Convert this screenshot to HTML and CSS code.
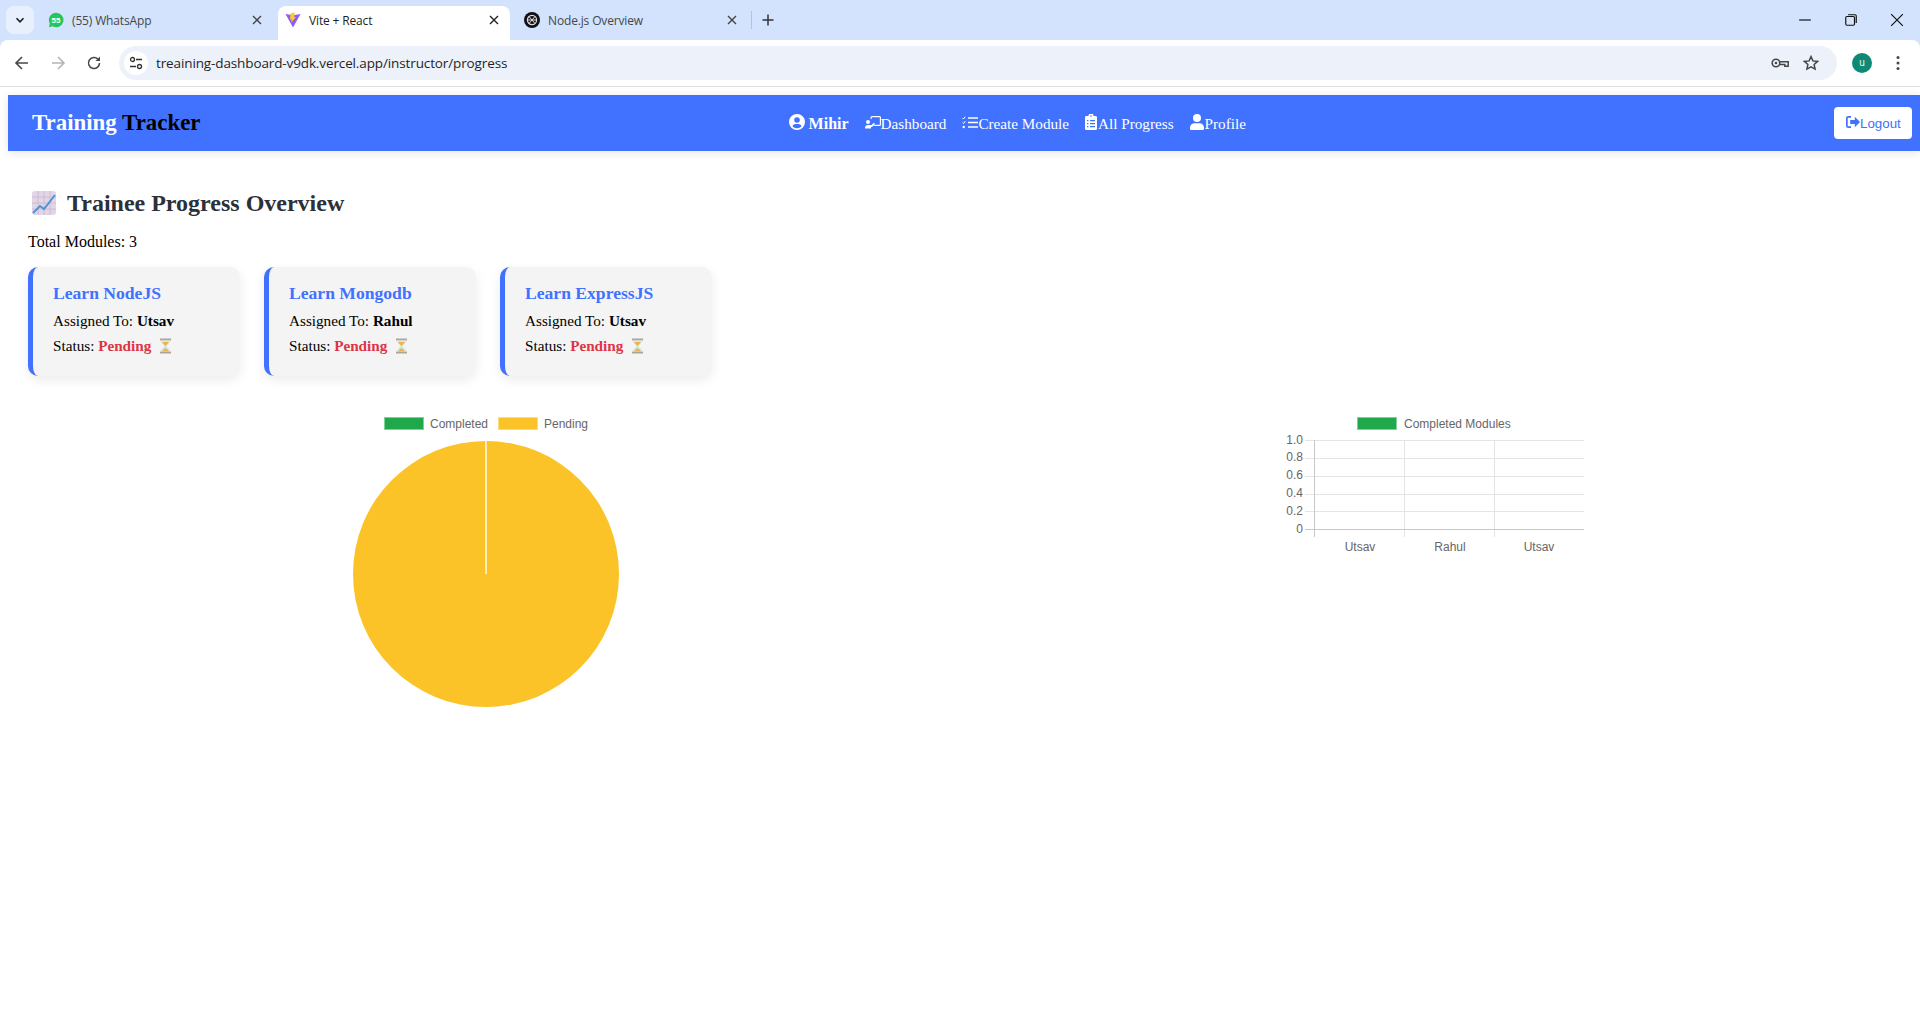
FILE: index.html
```html
<!DOCTYPE html>
<html lang="en">
<head>
<meta charset="utf-8">
<title>Vite + React</title>
<link rel="stylesheet" href="styles.css">
</head>
<body>
<header class="chrome">
  <div class="tabstrip">
    <div class="tab-search"><svg class="ic10" viewBox="0 0 10 10"><path d="M1.5 3.2 5 6.8l3.5-3.6" fill="none" stroke="#1f1f1f" stroke-width="1.6"/></svg></div>
    <div class="tab tab-first">
      <svg class="fav" viewBox="0 0 16 16"><path d="M8 .8a7.2 7.2 0 0 0-6.2 10.8L.9 15.2l3.7-1A7.2 7.2 0 1 0 8 .8z" fill="#25c65a"/><text x="8" y="11" class="fav-num">55</text></svg>
      <span class="tab-label">(55) WhatsApp</span>
      <svg class="tab-x" viewBox="0 0 10 10"><path d="M1 1l8 8M9 1l-8 8" stroke="#444" stroke-width="1.4"/></svg>
    </div>
    <div class="tab tab-active">
      <svg class="fav" viewBox="0 0 16 16"><path d="M.5 2 8 15.500 15.500 2 8 3.200z" fill="#8d5cf6"/><path d="M9.800.6 5.400 1.600l-.3 6 1.600-.3-.5 3.400L11 5l-1.800.3z" fill="#fdc82f"/></svg>
      <span class="tab-label tab-label-dark">Vite + React</span>
      <svg class="tab-x" viewBox="0 0 10 10"><path d="M1 1l8 8M9 1l-8 8" stroke="#222" stroke-width="1.4"/></svg>
    </div>
    <div class="tab tab-last">
      <svg class="fav" viewBox="0 0 16 16"><circle cx="8" cy="8" r="8" fill="#111"/><circle cx="8" cy="8" r="4.600" fill="none" stroke="#ddd" stroke-width="1.200"/><path d="M5 4.500l6 7M11 4.500l-6 7M3.600 8h8.800" stroke="#ddd" stroke-width="1"/></svg>
      <span class="tab-label">Node.js Overview</span>
      <svg class="tab-x" viewBox="0 0 10 10"><path d="M1 1l8 8M9 1l-8 8" stroke="#444" stroke-width="1.4"/></svg>
    </div>
    <span class="tab-sep"></span>
    <svg class="tab-plus" viewBox="0 0 12 12"><path d="M6 .5v11M.5 6h11" stroke="#333" stroke-width="1.5"/></svg>
    <div class="win-controls">
      <svg class="win-ic" viewBox="0 0 12 12"><path d="M1 6h10" stroke="#111" stroke-width="1"/></svg>
      <svg class="win-ic" viewBox="0 0 12 12"><rect x="1.500" y="3" width="7.500" height="7.500" rx="1" fill="none" stroke="#111"/><path d="M3.500 1.500h6a1 1 0 0 1 1 1v6" fill="none" stroke="#111"/></svg>
      <svg class="win-ic" viewBox="0 0 12 12"><path d="M1 1l10 10M11 1 1 11" stroke="#111" stroke-width="1"/></svg>
    </div>
  </div>
  <div class="toolbar">
    <svg class="tb-ic" viewBox="0 0 16 16"><path d="M14 8H2.500M8 2 2 8l6 6" fill="none" stroke="#474747" stroke-width="1.600"/></svg>
    <svg class="tb-ic" viewBox="0 0 16 16"><path d="M2 8h11.500M8 2l6 6-6 6" fill="none" stroke="#b4b4b4" stroke-width="1.600"/></svg>
    <svg class="tb-ic" viewBox="0 0 16 16"><path d="M13.500 8A5.500 5.500 0 1 1 12 4.200" fill="none" stroke="#474747" stroke-width="1.600"/><path d="M14 1.500V6H9.500z" fill="#474747"/></svg>
    <div class="omnibox">
      <span class="site-btn"><svg class="ic14" viewBox="0 0 14 14"><circle cx="3.500" cy="3.500" r="2" fill="none" stroke="#333" stroke-width="1.300"/><path d="M7 3.500h6M1 10.500h6" stroke="#333" stroke-width="1.300"/><circle cx="10.500" cy="10.500" r="2" fill="none" stroke="#333" stroke-width="1.300"/></svg></span>
      <span class="url">treaining-dashboard-v9dk.vercel.app/instructor/progress</span>
      <svg class="omni-key" viewBox="0 0 18 12"><circle cx="5" cy="6" r="3.800" fill="none" stroke="#474747" stroke-width="1.600"/><circle cx="5" cy="6" r="1.300" fill="#474747"/><path d="M9 4.800h8.200v4.400h-3.400V7.400H9" fill="none" stroke="#474747" stroke-width="1.500"/></svg>
      <svg class="omni-star" viewBox="0 0 16 16"><path d="m8 1.600 1.900 4.300 4.700.5-3.500 3.100 1 4.600L8 11.800l-4.100 2.300 1-4.600L1.400 6.400l4.700-.5z" fill="none" stroke="#474747" stroke-width="1.500"/></svg>
    </div>
    <span class="avatar">u</span>
    <svg class="kebab" viewBox="0 0 4 16"><circle cx="2" cy="2.500" r="1.500" fill="#474747"/><circle cx="2" cy="8" r="1.500" fill="#474747"/><circle cx="2" cy="13.500" r="1.500" fill="#474747"/></svg>
  </div>
</header>

<div class="page">
  <nav class="navbar">
    <div class="brand">Training <span class="brand-dark">Tracker</span></div>
    <div class="nav-links">
      <span class="nav-user"><svg class="nav-ic nav-ic-16" viewBox="0 0 16 16"><path fill="#fff" fill-rule="evenodd" d="M8 0a8 8 0 1 1 0 16A8 8 0 0 1 8 0zm0 3.200a2.800 2.800 0 1 0 0 5.600 2.800 2.800 0 0 0 0-5.600zM3.400 12.300A5.900 5.900 0 0 0 8 14.200a5.900 5.900 0 0 0 4.600-1.900C12 10.900 10.600 10 9.200 10H6.800c-1.400 0-2.800.9-3.400 2.300z"/></svg>Mihir</span>
      <span class="nav-link"><svg class="nav-ic" viewBox="0 0 16 13"><path fill="#fff" d="M5.500 1.500A1.500 1.500 0 0 1 7 0h7.500A1.500 1.500 0 0 1 16 1.500v7A1.500 1.500 0 0 1 14.500 10H8.500V8.800h6a.3.3 0 0 0 .3-.3v-7a.3.3 0 0 0-.3-.3H7a.3.3 0 0 0-.3.3V3H5.500z"/><circle cx="3" cy="6" r="2" fill="#fff"/><path fill="#fff" d="M0 12.500C0 10 1 9 3 9h3.500L9 6.800l.9.9L7 11H6v1.500z"/></svg>Dashboard</span>
      <span class="nav-link"><svg class="nav-ic" viewBox="0 0 16 13"><path d="M.5 2l1 1L3.300.6M.5 6.500l1 1 1.800-2.400" fill="none" stroke="#fff" stroke-width="1"/><circle cx="1.700" cy="11" r="1.200" fill="#fff"/><path d="M6 2h10M6 6.500h10M6 11h10" stroke="#fff" stroke-width="1.500"/></svg>Create Module</span>
      <span class="nav-link"><svg class="nav-ic nav-ic-12" viewBox="0 0 12 16"><path fill="#fff" fill-rule="evenodd" d="M1.300 2H3.500a2.500 2.500 0 0 1 5 0h2.200A1.300 1.300 0 0 1 12 3.300v11.400a1.300 1.300 0 0 1-1.300 1.300H1.300A1.300 1.300 0 0 1 0 14.700V3.300A1.300 1.300 0 0 1 1.300 2zM2 6v1.300h1.400V6zm3 0v1.300h5V6zM2 9v1.300h1.400V9zm3 0v1.300h5V9zm-3 3v1.300h1.400V12zm3 0v1.300h5V12zM6 1.300a.8.8 0 1 0 0 1.600.8.800 0 0 0 0-1.600z"/></svg>All Progress</span>
      <span class="nav-link"><svg class="nav-ic nav-ic-14" viewBox="0 0 14 16"><circle cx="7" cy="4" r="4" fill="#fff"/><path fill="#fff" d="M4.500 9.200h5A4.500 4.500 0 0 1 14 13.700V15a1 1 0 0 1-1 1H1a1 1 0 0 1-1-1v-1.300a4.500 4.500 0 0 1 4.500-4.500z"/></svg>Profile</span>
    </div>
    <button class="logout"><svg class="logout-ic" viewBox="0 0 14 12"><path fill="#4171ff" d="M5 0H2.300A2.300 2.300 0 0 0 0 2.300v7.400A2.300 2.300 0 0 0 2.300 12H5v-1.700H2.300a.6.6 0 0 1-.6-.6V2.300a.6.6 0 0 1 .6-.6H5zM8.800.8 14 6l-5.200 5.200V8H4.200V4h4.600z"/></svg>Logout</button>
  </nav>

  <main class="content">
    <h2 class="title">
      <svg class="emoji" viewBox="0 0 24 24"><rect width="24" height="24" rx="3" fill="#e2d5e6"/><path d="M6 0v24M12 0v24M18 0v24M0 6h24M0 12h24M0 18h24" stroke="#c9b7cf" stroke-width=".8"/><path d="M1 22l7-7 4 3L23 4" fill="none" stroke="#4f94d8" stroke-width="2"/></svg>
      <span>Trainee Progress Overview</span>
    </h2>
    <p class="total">Total Modules: 3</p>

    <div class="cards">
      <article class="card">
        <h3 class="card-title">Learn NodeJS</h3>
        <p class="card-line">Assigned To: <strong>Utsav</strong></p>
        <p class="card-line card-status">Status: <strong class="pending">Pending</strong> <svg class="hourglass" viewBox="0 0 13 16"><path d="M1 .5h11v2H1zM1 13.500h11v2H1z" fill="#b0a594"/><path d="M2 2.500h9c0 3-3.500 4.500-3.500 5.500S11 10.500 11 13.500H2C2 10.500 5.500 9 5.500 8S2 5.500 2 2.500z" fill="#cfe6f4"/><path d="M3.200 4h6.600C9 6 7 7 6.500 8 6 7 4 6 3.200 4zM3 13.500c.5-1.500 2.500-2.500 3.500-3.500 1 1 3 2 3.500 3.500z" fill="#f0b540"/></svg></p>
      </article>
      <article class="card">
        <h3 class="card-title">Learn Mongodb</h3>
        <p class="card-line">Assigned To: <strong>Rahul</strong></p>
        <p class="card-line card-status">Status: <strong class="pending">Pending</strong> <svg class="hourglass" viewBox="0 0 13 16"><path d="M1 .5h11v2H1zM1 13.500h11v2H1z" fill="#b0a594"/><path d="M2 2.500h9c0 3-3.500 4.500-3.500 5.500S11 10.500 11 13.500H2C2 10.500 5.500 9 5.500 8S2 5.500 2 2.500z" fill="#cfe6f4"/><path d="M3.200 4h6.600C9 6 7 7 6.500 8 6 7 4 6 3.200 4zM3 13.500c.5-1.500 2.500-2.500 3.500-3.500 1 1 3 2 3.500 3.500z" fill="#f0b540"/></svg></p>
      </article>
      <article class="card">
        <h3 class="card-title">Learn ExpressJS</h3>
        <p class="card-line">Assigned To: <strong>Utsav</strong></p>
        <p class="card-line card-status">Status: <strong class="pending">Pending</strong> <svg class="hourglass" viewBox="0 0 13 16"><path d="M1 .5h11v2H1zM1 13.500h11v2H1z" fill="#b0a594"/><path d="M2 2.500h9c0 3-3.500 4.500-3.500 5.500S11 10.500 11 13.500H2C2 10.500 5.500 9 5.500 8S2 5.500 2 2.500z" fill="#cfe6f4"/><path d="M3.200 4h6.600C9 6 7 7 6.500 8 6 7 4 6 3.200 4zM3 13.500c.5-1.500 2.500-2.500 3.500-3.500 1 1 3 2 3.500 3.500z" fill="#f0b540"/></svg></p>
      </article>
    </div>

    <section class="charts">
      <svg class="pie-chart" viewBox="28 410 916 300">
        <rect x="384.500" y="417.500" width="39" height="12" fill="#1fa94b" stroke="#7fd09a"/>
        <text x="430" y="427.500" class="chart-text">Completed</text>
        <rect x="498.500" y="417.500" width="39" height="12" fill="#fbc327" stroke="#fddc80"/>
        <text x="544" y="427.500" class="chart-text">Pending</text>
        <circle cx="486" cy="574" r="133" fill="#fbc327"/>
        <path d="M486 441v133" stroke="#fdeeb8" stroke-width="2"/>
      </svg>
      <svg class="bar-chart" viewBox="1280 410 320 150">
        <rect x="1357.500" y="417.500" width="39" height="12" fill="#1fa94b" stroke="#7fd09a"/>
        <text x="1404" y="427.500" class="chart-text">Completed Modules</text>
        <path class="grid-line" d="M1305 440.500h279M1305 458.500h279M1305 476.500h279M1305 494.500h279M1305 511.500h279M1404.500 440v97M1494.500 440v97"/>
        <path class="axis-line" d="M1314.500 440v97M1305 529.500h279"/>
        <text x="1303" y="443.500" class="chart-text tick-end">1.0</text>
        <text x="1303" y="461" class="chart-text tick-end">0.8</text>
        <text x="1303" y="479" class="chart-text tick-end">0.6</text>
        <text x="1303" y="497" class="chart-text tick-end">0.4</text>
        <text x="1303" y="515" class="chart-text tick-end">0.2</text>
        <text x="1303" y="533" class="chart-text tick-end">0</text>
        <text x="1360" y="551" class="chart-text tick-mid">Utsav</text>
        <text x="1450" y="551" class="chart-text tick-mid">Rahul</text>
        <text x="1539" y="551" class="chart-text tick-mid">Utsav</text>
      </svg>
    </section>
  </main>
</div>
</body>
</html>
```

FILE: styles.css
```css
* { box-sizing: border-box; }
html, body { margin: 0; height: 100%; }
body { background: #fff; overflow: hidden; font-family: "Liberation Serif", serif; color: #000; }

/* browser chrome */
.chrome { display: flex; flex-direction: column; height: 87px; background: #d3e3fd; }
.tabstrip { display: flex; align-items: center; height: 40px; padding-left: 6px; padding-top: 6px; }
.tab-search { width: 28px; height: 28px; margin-top: -6px; border-radius: 8px; background: #e9f0fd; display: flex; align-items: center; justify-content: center; }
.ic10 { width: 10px; height: 10px; }
.tab { display: flex; align-items: center; height: 34px; width: 232px; flex: none; padding-bottom: 6px; font-family: "Open Sans", sans-serif; font-size: 12px; }
.tab-first { margin-left: 6px; width: 238px; padding-left: 8px; }
.tab-first .tab-x { margin-right: 16px; }
.tab-active { background: #fff; border-radius: 8px 8px 0 0; padding-left: 7px; }
.tab-last { padding-left: 14px; width: 232px; }
.tab-last .tab-x { margin-right: 5px; }
.fav { width: 16px; height: 16px; flex: none; }
.fav-num { font: bold 8px "Liberation Sans", sans-serif; fill: #fff; text-anchor: middle; }
.tab-label { margin-left: 8px; color: #45474a; flex: 1; letter-spacing: -.15px; }
.tab-label-dark { color: #1f1f1f; }
.tab-x { width: 10px; height: 10px; flex: none; margin-right: 11px; }
.tab-sep { width: 1px; height: 18px; background: #a9c3ee; margin-left: 9px; margin-top: -6px; }
.tab-plus { width: 12px; height: 12px; margin-left: 10px; margin-top: -6px; }
.win-controls { margin-left: auto; display: flex; gap: 32px; margin-top: -6px; padding-right: 16px; }
.win-ic { width: 14px; height: 14px; }
.toolbar { display: flex; align-items: center; height: 47px; background: #fff; border-radius: 8px 8px 0 0; border-bottom: 1px solid #e1e1e1; padding: 0 0 1px 14px; }
.tb-ic { width: 16px; height: 16px; margin-right: 20px; }
.omnibox { display: flex; align-items: center; width: 1718px; height: 34px; margin-left: -3px; border-radius: 17px; background: #edf2fa; padding: 0 5px; }
.site-btn { width: 24px; height: 24px; border-radius: 50%; background: #fff; display: flex; align-items: center; justify-content: center; }
.ic14 { width: 14px; height: 14px; }
.url { margin-left: 8px; font-family: "Open Sans", sans-serif; font-size: 13.500px; color: #1f1f1f; letter-spacing: -.12px; flex: 1; }
.omni-key { width: 18px; height: 12px; margin-right: 14px; }
.omni-star { width: 16px; height: 16px; margin-right: 13px; }
.avatar { width: 20px; height: 20px; border-radius: 50%; background: #0d8a76; color: #e6f5f1; margin-left: 15px; font: 10px/19px "Liberation Sans", sans-serif; text-align: center; }
.kebab { width: 4px; height: 16px; margin-left: 24px; }

/* page */
.page { padding: 8px 0 0 8px; }
.navbar { display: flex; align-items: center; justify-content: space-between; height: 56px; padding: 0 8px 0 24px; background: #4171ff; box-shadow: 0 2px 10px rgba(0, 0, 0, .1); }
.brand { font-size: 22.900px; font-weight: 700; color: #fff; }
.brand-dark { color: #000; }
.nav-links { display: flex; gap: 16px; color: #fff; font-size: 15.200px; padding-top: 2px; }
.nav-user, .nav-link { display: inline-flex; align-items: center; }
.nav-user { font-weight: 700; font-size: 16px; }
.nav-ic { width: 16px; height: 13px; margin-top: -4px; }
.nav-ic-16 { height: 16px; margin-top: -5px; margin-right: 4px; }
.nav-ic-12 { width: 12px; height: 16px; margin-right: 1px; margin-top: -5px; }
.nav-ic-14 { width: 14px; height: 16px; margin-right: 1px; margin-top: -5px; }
.logout { display: flex; align-items: center; width: 78px; height: 32px; padding: 0 0 0 12px; border: 0; border-radius: 4px; background: #fff; color: #4171ff; font-family: "Liberation Sans", sans-serif; font-size: 13.333px; }
.logout-ic { width: 14px; height: 12px; margin-top: -3px; }

.content { padding: 0 20px; }
.title { display: flex; align-items: center; gap: 11px; height: 28px; margin: 38px 0 0 4px; font-size: 24px; line-height: 28px; color: #2c3038; }
.emoji { width: 24px; height: 24px; }
.total { margin: 16px 0 0; font-size: 16px; line-height: 18px; }
.cards { display: flex; gap: 24px; margin-top: 16px; }
.card { width: 212px; height: 109px; padding: 16px 20px; background: #f4f4f4; border-left: 5px solid #4171ff; border-radius: 10px; box-shadow: 0 4px 12px rgba(0, 0, 0, .08); }
.card-title { margin: 0; font-size: 17.600px; line-height: 20px; color: #4171ff; }
.card-line { margin: 9px 0 0; font-size: 15.200px; line-height: 18px; }
.card-status { margin-top: 7px; }
.pending { color: #dc3545; }
.hourglass { width: 13px; height: 16px; margin-left: 4px; vertical-align: -3px; }

.charts { display: flex; margin-top: 34px; }
.pie-chart { width: 916px; height: 300px; flex: none; }
.bar-chart { width: 320px; height: 150px; flex: none; margin-left: 336px; }
.chart-text { font: 12px "Liberation Sans", sans-serif; fill: #666; }
.tick-end { text-anchor: end; }
.tick-mid { text-anchor: middle; }
.grid-line { stroke: #e4e4e4; stroke-width: 1; fill: none; }
.axis-line { stroke: #c8c8c8; stroke-width: 1; fill: none; }
```
